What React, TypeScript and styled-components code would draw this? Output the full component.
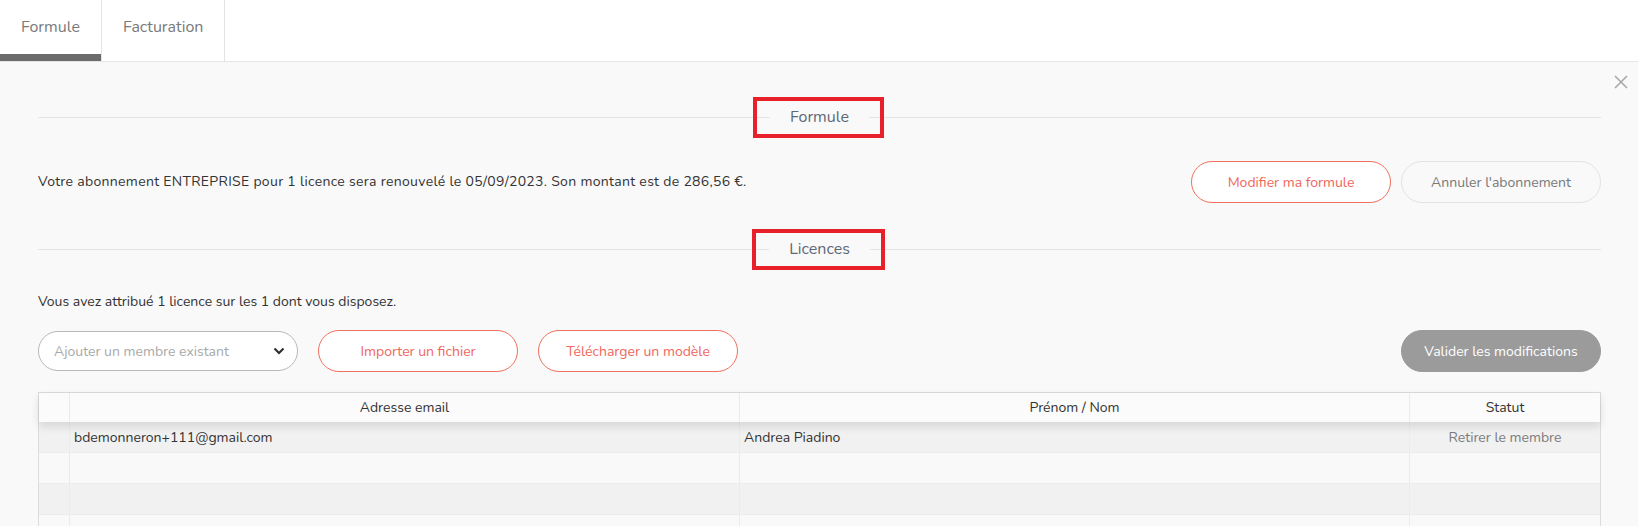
import React from "react";
import styled, { createGlobalStyle } from "styled-components";

const GlobalStyle = createGlobalStyle`
  * {
    box-sizing: border-box;
  }
  body {
    margin: 0;
    background: #f9f9f9;
    font-family: "Nunito", "Lato", "Noto Sans", sans-serif;
    font-size: 14px;
    color: #333;
  }
`;

const Page = styled.div`
  min-height: 526px;
  background: #f9f9f9;
`;

const TabBar = styled.nav`
  display: flex;
  height: 62px;
  background: #fff;
  border-bottom: 1px solid #e6e6e6;
`;

const Tab = styled.div<{ $active?: boolean }>`
  display: flex;
  align-items: center;
  justify-content: center;
  padding: 0 21px 7px;
  height: 61px;
  border-right: 1px solid #e4e4e4;
  font-size: 16px;
  color: #7a7a7a;
  box-shadow: ${(p) => (p.$active ? "inset 0 -7px 0 #6b6b6b" : "none")};
`;

const Content = styled.main`
  position: relative;
  padding: 45px 37px 0 38px;
`;

const CloseButton = styled.button`
  position: absolute;
  top: 12px;
  right: 9px;
  width: 16px;
  height: 16px;
  padding: 0;
  border: 0;
  background: none;
  display: flex;
  align-items: center;
  justify-content: center;
`;

const SectionHeader = styled.div<{ $top: number }>`
  display: flex;
  align-items: center;
  height: 20px;
  margin-top: ${(p) => p.$top}px;
`;

const Rule = styled.div`
  flex: 1;
  height: 1px;
  background: #e4e4e4;
`;

const Title = styled.h2`
  position: relative;
  margin: 0;
  padding: 0 20px;
  font-size: 16px;
  font-weight: 400;
  line-height: 20px;
  color: #5d6877;
`;

const Highlight = styled.span`
  position: absolute;
  top: -10px;
  bottom: -11px;
  left: -17px;
  right: -15px;
  border: 4px solid #e8202a;
  pointer-events: none;
`;

const Row = styled.div<{ $top: number }>`
  display: flex;
  align-items: center;
  gap: 20px;
  margin-top: ${(p) => p.$top}px;
`;

const Sentence = styled.p<{ $top?: number; $spread?: number }>`
  margin: ${(p) => p.$top ?? 0}px 0 0;
  line-height: 20px;
  letter-spacing: ${(p) => p.$spread ?? 0}px;
  color: #333;
`;

const Spacer = styled.div`
  flex: 1;
`;

const Actions = styled.div`
  display: flex;
  gap: 10px;
`;

type Variant = "primary" | "ghost" | "muted";

const Pill = styled.button<{ $variant?: Variant }>`
  width: 200px;
  height: 42px;
  border-radius: 21px;
  font-family: inherit;
  font-size: 14px;
  cursor: pointer;
  border: 1px solid
    ${(p) =>
      p.$variant === "ghost" ? "#e3e3e3" : p.$variant === "muted" ? "#9b9b9b" : "#f0705e"};
  background: ${(p) =>
    p.$variant === "ghost" ? "#f9f9f9" : p.$variant === "muted" ? "#9b9b9b" : "#fff"};
  color: ${(p) =>
    p.$variant === "ghost" ? "#787878" : p.$variant === "muted" ? "#fff" : "#f0665d"};
`;

const Select = styled.div`
  display: flex;
  align-items: center;
  justify-content: space-between;
  width: 260px;
  height: 40px;
  padding: 0 12px 0 15px;
  border: 1px solid #b8b8b8;
  border-radius: 20px;
  background: #fff;
  color: #a9a9a9;
`;

const Table = styled.div`
  margin-top: 20px;
  border: 1px solid #dcdcdc;
  border-bottom: 0;
`;

const Columns = styled.div`
  display: grid;
  grid-template-columns: 30px 1fr 1fr 191px;
`;

const HeadRow = styled(Columns)`
  position: relative;
  z-index: 1;
  height: 29px;
  background: #fbfbfb;
  box-shadow: 0 4px 10px rgba(0, 0, 0, 0.12);
`;

const BodyRow = styled(Columns)<{ $odd: boolean }>`
  height: 31px;
  background: ${(p) => (p.$odd ? "#f1f1f1" : "#f9f9f9")};
  border-bottom: 1px solid #ececec;
`;

const Cell = styled.div<{ $center?: boolean; $muted?: boolean }>`
  display: flex;
  align-items: center;
  justify-content: ${(p) => (p.$center ? "center" : "flex-start")};
  padding: 0 4px;
  border-left: 1px solid #ebebeb;
  color: ${(p) => (p.$muted ? "#7b7b7b" : "#333")};
  &:first-child {
    border-left: 0;
  }
`;

const members = [
  { email: "bdemonneron+111@gmail.com", name: "Andrea Piadino", status: "Retirer le membre" },
  { email: "", name: "", status: "" },
  { email: "", name: "", status: "" },
  { email: "", name: "", status: "" },
];

const CloseIcon = () => (
  <svg width="14" height="14" viewBox="0 0 14 14">
    <path d="M1 1 L13 13 M13 1 L1 13" stroke="#a8a8a8" strokeWidth="1.6" />
  </svg>
);

const Chevron = () => (
  <svg width="12" height="8" viewBox="0 0 12 8">
    <polyline points="1.5,1.5 6,6 10.5,1.5" fill="none" stroke="#2b2b2b" strokeWidth="2" />
  </svg>
);

export default function App() {
  return (
    <Page>
      <GlobalStyle />
      <TabBar>
        <Tab $active>Formule</Tab>
        <Tab>Facturation</Tab>
      </TabBar>
      <Content>
        <CloseButton aria-label="Fermer">
          <CloseIcon />
        </CloseButton>

        <SectionHeader $top={0}>
          <Rule />
          <Title>
            Formule
            <Highlight />
          </Title>
          <Rule />
        </SectionHeader>

        <Row $top={34}>
          <Sentence $spread={0.31}>
            Votre abonnement ENTREPRISE pour 1 licence sera renouvelé le 05/09/2023. Son montant
            est de 286,56 €.
          </Sentence>
          <Spacer />
          <Actions>
            <Pill>Modifier ma formule</Pill>
            <Pill $variant="ghost">Annuler l'abonnement</Pill>
          </Actions>
        </Row>

        <SectionHeader $top={36}>
          <Rule />
          <Title>
            Licences
            <Highlight />
          </Title>
          <Rule />
        </SectionHeader>

        <Sentence $top={33}>Vous avez attribué 1 licence sur les 1 dont vous disposez.</Sentence>

        <Row $top={18}>
          <Select>
            Ajouter un membre existant
            <Chevron />
          </Select>
          <Pill>Importer un fichier</Pill>
          <Pill>Télécharger un modèle</Pill>
          <Spacer />
          <Pill $variant="muted">Valider les modifications</Pill>
        </Row>

        <Table>
          <HeadRow>
            <Cell />
            <Cell $center>Adresse email</Cell>
            <Cell $center>Prénom / Nom</Cell>
            <Cell $center>Statut</Cell>
          </HeadRow>
          {members.map((m, i) => (
            <BodyRow key={i} $odd={i % 2 === 0}>
              <Cell />
              <Cell>{m.email}</Cell>
              <Cell>{m.name}</Cell>
              <Cell $center $muted>
                {m.status}
              </Cell>
            </BodyRow>
          ))}
        </Table>
      </Content>
    </Page>
  );
}
